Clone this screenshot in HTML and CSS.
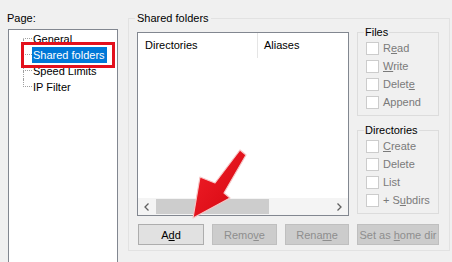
FILE: index.html
```html
<!DOCTYPE html>
<html lang="en">
<head>
    <meta charset="UTF-8">
    <title>Shared folders</title>
    <link rel="stylesheet" href="styles.css">
</head>
<body>

<div class="dialog">
    <div class="page-col">
        <div class="page-label">Page:</div>
        <ul class="tree">
            <li class="tree-item first"><span class="twig"><span class="twig-top"></span><span class="twig-bottom"></span></span><span class="tree-text">General</span></li>
            <li class="tree-item"><span class="twig"><span class="twig-top"></span><span class="twig-bottom"></span></span><span class="tree-text selected">Shared folders</span></li>
            <li class="tree-item"><span class="twig"><span class="twig-top"></span><span class="twig-bottom"></span></span><span class="tree-text">Speed Limits</span></li>
            <li class="tree-item last"><span class="twig"><span class="twig-top"></span><span class="twig-bottom"></span></span><span class="tree-text">IP Filter</span></li>
        </ul>
    </div>

    <fieldset class="page-box">
        <legend>Shared folders</legend>
        <div class="share-row">
            <div class="list">
                <div class="list-head">
                    <div class="col-dir">Directories</div>
                    <div class="col-alias">Aliases</div>
                </div>
                <div class="list-body"></div>
                <div class="scrollbar">
                    <div class="sb-btn">
                        <svg width="5" height="8" viewBox="0 0 5 8"><path d="M4.5 0.5 L1 4 L4.5 7.5" fill="none" stroke="#606060" stroke-width="1.3"/></svg>
                    </div>
                    <div class="sb-thumb"></div>
                    <div class="sb-track"></div>
                    <div class="sb-btn">
                        <svg width="5" height="8" viewBox="0 0 5 8"><path d="M0.5 0.5 L4 4 L0.5 7.5" fill="none" stroke="#606060" stroke-width="1.3"/></svg>
                    </div>
                </div>
            </div>

            <div class="perms">
                <fieldset class="perm-group">
                    <legend>Files</legend>
                    <div class="check-row"><span class="check"></span><span>R<u>e</u>ad</span></div>
                    <div class="check-row"><span class="check"></span><span><u>W</u>rite</span></div>
                    <div class="check-row"><span class="check"></span><span>Delet<u>e</u></span></div>
                    <div class="check-row"><span class="check"></span><span>Append</span></div>
                </fieldset>
                <fieldset class="perm-group dirs">
                    <legend>Directories</legend>
                    <div class="check-row"><span class="check"></span><span><u>C</u>reate</span></div>
                    <div class="check-row"><span class="check"></span><span>Delete</span></div>
                    <div class="check-row"><span class="check"></span><span>List</span></div>
                    <div class="check-row"><span class="check"></span><span>+ S<u>u</u>bdirs</span></div>
                </fieldset>
            </div>
        </div>

        <div class="buttons">
            <button class="btn btn-add">A<u>d</u>d</button>
            <button class="btn btn-remove" disabled>Remo<u>v</u>e</button>
            <button class="btn btn-rename" disabled>Rena<u>m</u>e</button>
            <button class="btn btn-home" disabled>Set as <u>h</u>ome dir</button>
        </div>
    </fieldset>
</div>

<!-- annotation overlay -->
<div class="callout-box"></div>
<svg class="callout-arrow" width="80" height="85" viewBox="0 0 80 85">
    <defs>
        <linearGradient id="arrowFill" x1="0" y1="0" x2="1" y2="1">
            <stop offset="0" stop-color="#f2202a"/>
            <stop offset="0.6" stop-color="#e0101a"/>
            <stop offset="1" stop-color="#b8080f"/>
        </linearGradient>
    </defs>
    <polygon points="13,78 20,37 35,43 60,10 66,15 44,53 50,58" fill="url(#arrowFill)" stroke="#f6c6c6" stroke-width="1.2" stroke-linejoin="round"/>
</svg>

</body>
</html>
```

FILE: styles.css
```css
body {
    margin: 0;
    width: 452px;
    height: 262px;
    overflow: hidden;
    background-color: #f0f0f0;
    font-family: "Liberation Sans", Arial, sans-serif;
    font-size: 11px;
    color: #000;
    position: relative;
}
.dialog {
    display: flex;
    align-items: flex-start;
    padding: 11px 0 0 8px;
}

/* left column */
.page-col {
    width: 110px;
    display: flex;
    flex-direction: column;
}
.page-label {
    line-height: 14px;
    height: 14px;
    margin-left: -1px;
}
.tree {
    list-style: none;
    margin: 4px 0 0;
    padding: 1px 0 0;
    height: 240px;
    box-sizing: border-box;
    border: 1px solid #828790;
    background-color: #fff;
}
.tree-item {
    display: flex;
    height: 16px;
}
.twig {
    display: flex;
    flex-direction: column;
    width: 9px;
    margin-left: 14px;
}
.twig-top {
    height: 8px;
    box-sizing: border-box;
    border-left: 1px dotted #a0a0a0;
    border-bottom: 1px dotted #a0a0a0;
}
.twig-bottom {
    height: 8px;
    box-sizing: border-box;
    border-left: 1px dotted #a0a0a0;
}
.tree-item.first .twig-top {
    border-left-color: transparent;
}
.tree-item.last .twig-bottom {
    border-left: none;
}
.tree-text {
    line-height: 16px;
    padding: 0 2px 0 1px;
}
.tree-text.selected {
    background-color: #0078d7;
    color: #fff;
}

/* right group */
.page-box {
    margin: 0 0 0 10px;
    width: 322px;
    box-sizing: border-box;
    padding: 0 10px 5px 8px;
    border: 1px solid #e2e2e2;
    min-width: 0;
}
.page-box > legend {
    padding: 0 2px;
    margin-left: -2px;
    line-height: 14px;
}
.share-row {
    display: flex;
    align-items: flex-start;
}
.list {
    margin-top: 7px;
    width: 212px;
    height: 184px;
    box-sizing: border-box;
    border: 1px solid #828790;
    background-color: #fff;
    display: flex;
    flex-direction: column;
}
.list-head {
    display: flex;
    height: 25px;
    line-height: 25px;
}
.col-dir {
    width: 120px;
    padding-left: 7px;
    box-sizing: border-box;
    border-right: 1px solid #e5e5e5;
}
.col-alias {
    padding-left: 6px;
}
.list-body {
    flex: 1;
}
.scrollbar {
    height: 17px;
    display: flex;
    align-items: center;
    background-color: #f4f4f4;
}
.sb-btn {
    width: 17px;
    height: 17px;
    display: flex;
    align-items: center;
    justify-content: center;
}
.sb-thumb {
    width: 113px;
    height: 15px;
    margin-left: 1px;
    background-color: #cdcdcd;
}
.sb-track {
    flex: 1;
}

/* permissions */
.perms {
    margin-left: 8px;
    width: 82px;
    display: flex;
    flex-direction: column;
}
.perm-group {
    margin: 0;
    padding: 0 4px 4px 8px;
    border: 1px solid #dcdcdc;
    min-width: 0;
}
.perm-group > legend {
    padding: 0 1px;
    margin-left: -2px;
    line-height: 14px;
}
.perm-group.dirs {
    margin-top: 7px;
}
.check-row {
    display: flex;
    align-items: center;
    gap: 4px;
    height: 18px;
    color: #7a7a7a;
    white-space: nowrap;
}
.check {
    width: 13px;
    height: 13px;
    box-sizing: border-box;
    border: 1px solid #cccccc;
    background-color: #fff;
}

/* buttons */
.buttons {
    display: flex;
    gap: 8px;
    margin-top: 8px;
}
.btn {
    height: 21px;
    padding: 0;
    font: inherit;
    color: #000;
    background-color: #e1e1e1;
    border: 1px solid #adadad;
    white-space: nowrap;
}
.btn:disabled {
    background-color: #cccccc;
    border-color: #bfbfbf;
    color: #8e8e8e;
}
.btn-add {
    width: 66px;
    margin-left: 1px;
}
.btn-remove {
    width: 65px;
}
.btn-rename {
    width: 64px;
}
.btn-home {
    width: 82px;
}

/* annotation */
.callout-box {
    position: absolute;
    left: 21px;
    top: 42px;
    width: 94px;
    height: 26px;
    box-sizing: border-box;
    border: 3px solid #e3101c;
}
.callout-arrow {
    position: absolute;
    left: 180px;
    top: 140px;
}
```
